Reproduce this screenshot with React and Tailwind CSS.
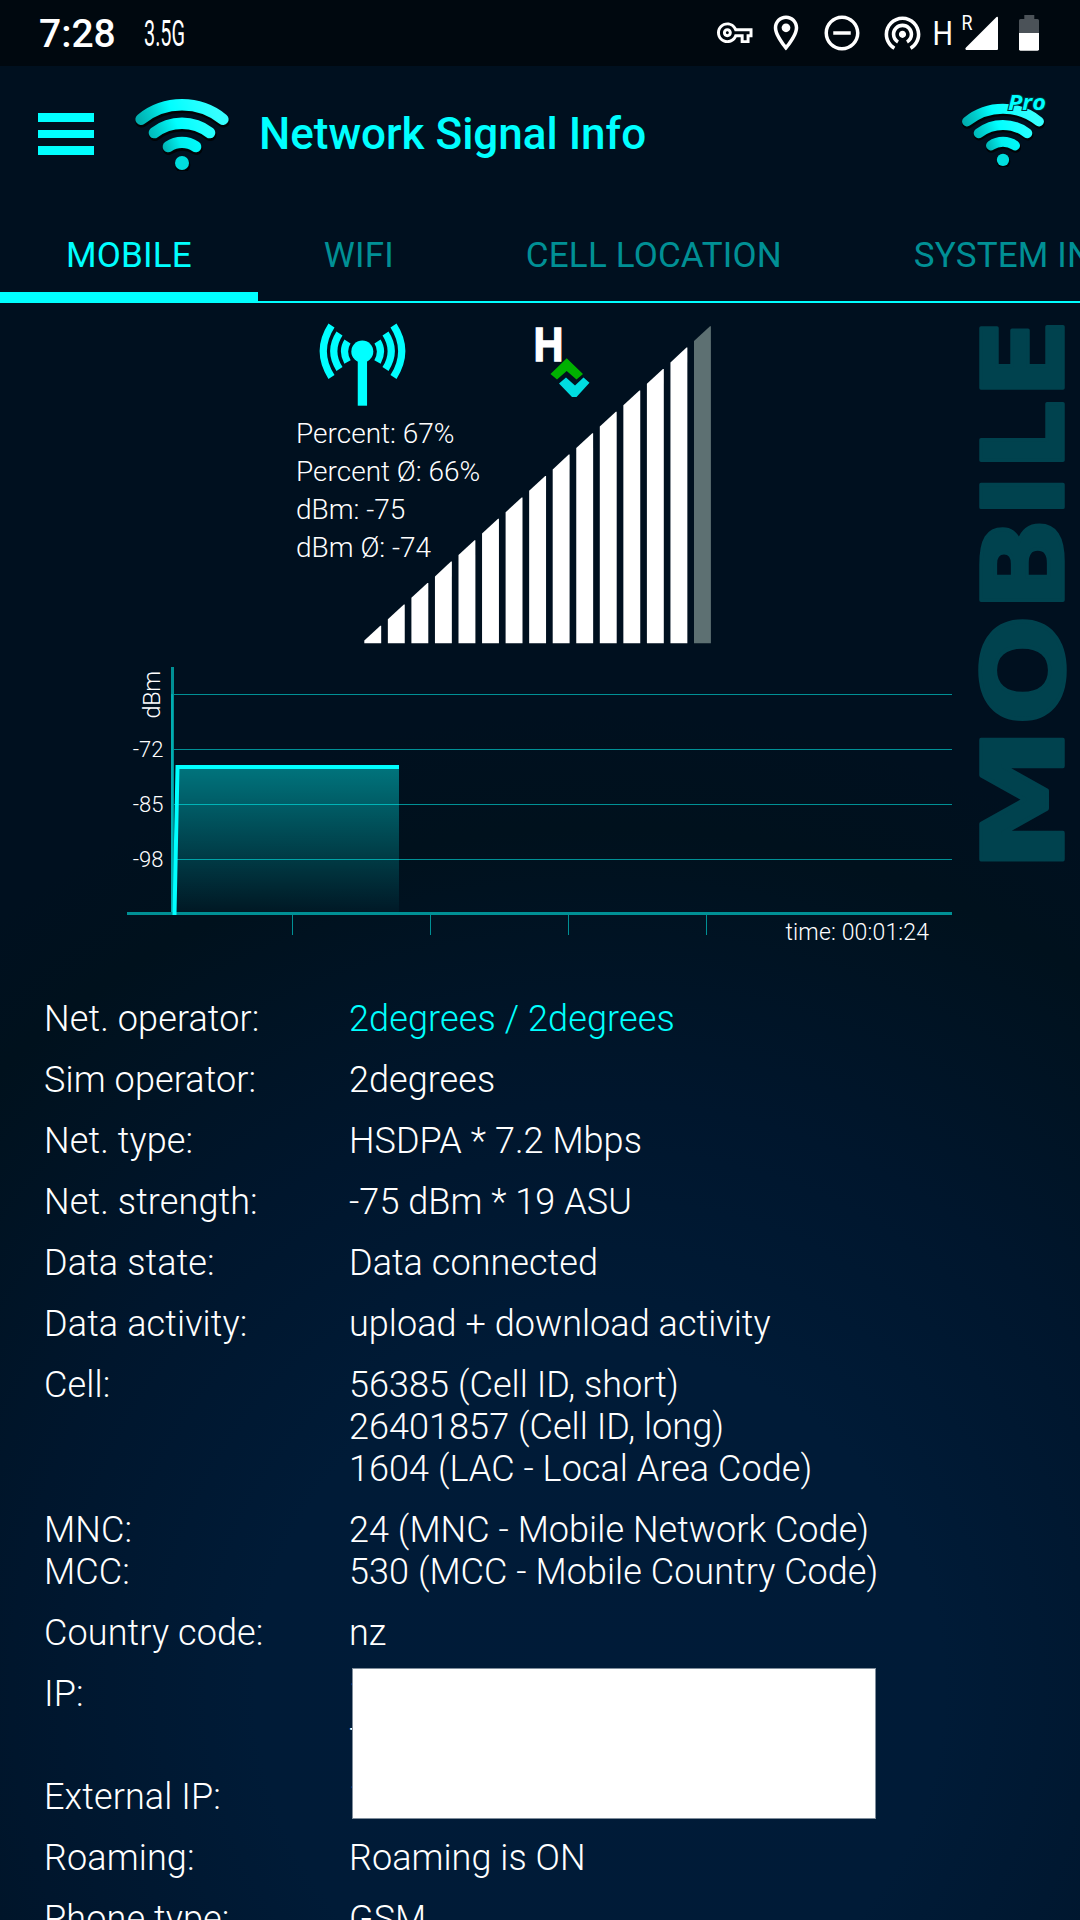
import React from "react";
import {
  MdOutlineLocationOn,
  MdRemoveCircleOutline,
  MdWifiTethering,
} from "react-icons/md";

const tabs = ["MOBILE", "WIFI", "CELL LOCATION", "SYSTEM INFO"];

const rows = [
  { label: ["Net. operator:"], value: ["2degrees / 2degrees"], accent: true },
  { label: ["Sim operator:"], value: ["2degrees"] },
  { label: ["Net. type:"], value: ["HSDPA * 7.2 Mbps"] },
  { label: ["Net. strength:"], value: ["-75 dBm * 19 ASU"] },
  { label: ["Data state:"], value: ["Data connected"] },
  { label: ["Data activity:"], value: ["upload + download activity"] },
  {
    label: ["Cell:"],
    value: [
      "56385 (Cell ID, short)",
      "26401857 (Cell ID, long)",
      "1604 (LAC - Local Area Code)",
    ],
  },
  {
    label: ["MNC:", "MCC:"],
    value: ["24 (MNC - Mobile Network Code)", "530 (MCC - Mobile Country Code)"],
  },
  { label: ["Country code:"], value: ["nz"] },
  { label: ["IP:"], value: ["1", "f"], masked: true },
  { label: ["External IP:"], value: ["1"] },
  { label: ["Roaming:"], value: ["Roaming is ON"] },
  { label: ["Phone type:"], value: ["GSM"] },
];

const WifiLogo = ({ id, className }) => (
  <svg viewBox="0 0 98 76" className={className}>
    <defs>
      <linearGradient id={id} gradientUnits="userSpaceOnUse" x1="6" y1="44" x2="82" y2="14">
        <stop offset="0" stopColor="#00a3a3" />
        <stop offset="0.25" stopColor="#00cccc" />
        <stop offset="0.5" stopColor="#00ffff" />
        <stop offset="1" stopColor="#35ffff" />
      </linearGradient>
      <linearGradient id={id + "-in"} gradientUnits="userSpaceOnUse" x1="24" y1="56" x2="70" y2="38">
        <stop offset="0" stopColor="#009a9a" />
        <stop offset="0.5" stopColor="#00efef" />
        <stop offset="1" stopColor="#00ffff" />
      </linearGradient>
    </defs>
    {/* dark offset shadow */}
    <g transform="translate(0.6 2)" fill="none" stroke="#000306" strokeWidth="12.6" strokeLinecap="round">
      <path d="M8 24.3A65 65 0 0 1 90 24.3" />
      <path d="M21.3 37.7A45.3 45.3 0 0 1 76.7 37.7" />
      <path d="M35.3 51.7A24 24 0 0 1 62.7 51.7" />
      <circle cx="49" cy="68" r="1.5" />
    </g>
    <g fill="none" stroke={`url(#${id})`} strokeWidth="11.3" strokeLinecap="round">
      <path d="M8 24.3A65 65 0 0 1 90 24.3" />
      <path d="M21.3 37.7A45.3 45.3 0 0 1 76.7 37.7" />
      <path d="M35.3 51.7A24 24 0 0 1 62.7 51.7" stroke={`url(#${id}-in)`} />
    </g>
    <circle cx="49" cy="68" r="7" fill="#00dede" />
  </svg>
);

const StatusBar = () => (
  <div className="flex h-[66px] items-start bg-[#00080f] text-white">
    <span className="ml-[39px] mt-[11px] w-[78px] text-[39px] leading-[46px] font-medium">
      7:28
    </span>
    <svg className="ml-[25px] mt-[10px] h-[46px] w-[48px] overflow-visible" viewBox="142 10 48 46">
      <text x="144" y="46" textLength="41" lengthAdjust="spacingAndGlyphs" fill="#fff" fontSize="36" fontWeight="400">
        3.5G
      </text>
    </svg>
    <svg className="ml-[527px] mt-[15px] size-[35.5px]" viewBox="0 0 24 24" fill="#fff">
      <path d="M22 19h-6v-4h-2.68c-1.14 2.42-3.6 4-6.32 4-3.86 0-7-3.14-7-7s3.14-7 7-7c2.72 0 5.17 1.58 6.32 4H24v6h-2v4zm-4-2h2v-4h2v-2H11.94l-.23-.67C11.01 8.34 9.11 7 7 7c-2.76 0-5 2.24-5 5s2.24 5 5 5c2.11 0 4.01-1.34 4.71-3.33l.23-.67H18v4zM7 15c-1.65 0-3-1.35-3-3s1.35-3 3-3 3 1.35 3 3-1.35 3-3 3zm0-4c-.55 0-1 .45-1 1s.45 1 1 1 1-.45 1-1-.45-1-1-1z" />
    </svg>
    <MdOutlineLocationOn className="ml-[12px] mt-[11.5px] size-[42px]" />
    <MdRemoveCircleOutline className="ml-[14px] mt-[11.5px] size-[42px]" />
    <MdWifiTethering className="ml-[18px] mt-[11px] size-[43px]" />
    <svg className="ml-[8px] mt-[5px] h-[51px] w-[110px] overflow-visible" viewBox="932 5 110 51">
      <text x="932.500" y="44.700" fontSize="34" fill="#fff" textLength="20.500" lengthAdjust="spacingAndGlyphs">H</text>
      <text x="961.500" y="30" fontSize="21" fill="#fff" textLength="11" lengthAdjust="spacingAndGlyphs">R</text>
      <path d="M998 18v31a1 1 0 0 1-1 1H966q-1.500-1 0-2.400L996.500 17q1.500-.800 1.500 1z" fill="#fff" />
      <path d="M1024.300 15h10v4h3.200q1.500 0 1.500 1.500V33h-20V20.500q0-1.500 1.500-1.500h3.800z" fill="#4b5258" />
      <path d="M1019 33h20v16.300q0 1.400-1.400 1.400h-17.200q-1.400 0-1.400-1.400z" fill="#fff" />
    </svg>
  </div>
);

const Header = () => (
  <header className="flex h-[123px] items-start">
    <div className="ml-[38px] mt-[47px] flex w-[56px] flex-col gap-[8px]">
      <span className="h-[8.5px] bg-[#00ffff]"></span>
      <span className="h-[8.5px] bg-[#00ffff]"></span>
      <span className="h-[8.5px] bg-[#00ffff]"></span>
    </div>
    <WifiLogo id="logo" className="ml-[38.5px] mt-[29px] h-[76px] w-[98px]" />
    <h1 className="ml-[28.5px] mt-[42px] text-[44px] leading-[52px] font-medium whitespace-nowrap text-[#00ffff]">
      Network Signal Info
    </h1>
    <div className="relative mr-[34px] mt-[34px] ml-auto">
      <WifiLogo id="pro" className="h-[67px] w-[86px]" />
      <svg className="absolute -top-[12px] left-[44px] h-[32px] w-[50px] overflow-visible" viewBox="0 0 50 32">
        <text x="4" y="21.500" fontSize="21.500" fontWeight="700" fontStyle="italic" fontFamily="Open Sans, sans-serif" fill="#00ffff" stroke="#003038" strokeWidth="2" paintOrder="stroke" textLength="38" lengthAdjust="spacingAndGlyphs">
          Pro
        </text>
      </svg>
    </div>
  </header>
);

const Tabs = () => (
  <nav className="flex h-[114px] overflow-hidden border-b-2 border-[#00ffff]">
    {tabs.map((tab, i) => (
      <div
        key={tab}
        className={
          i === 0
            ? "-mb-[2px] flex shrink-0 justify-center border-b-[11px] border-[#00ffff] px-[66px] pt-[46px] text-[#00ffff]"
            : "flex shrink-0 justify-center px-[66px] pt-[46px] text-[#009095]"
        }
      >
        <span className="text-[35px] leading-[41px] tracking-[0.17px] whitespace-nowrap">{tab}</span>
      </div>
    ))}
  </nav>
);

const SignalBars = () => {
  const bars = Array.from({ length: 15 }, (_, i) => {
    const x = 1.3 + i * 23.55;
    const top = 299.8 - i * 21.4;
    return { x, right: top, left: Math.min(top + 14.8, 317.3) };
  });
  return (
    <svg className="h-[320px] w-[352px]" viewBox="0 0 352 320">
      {bars.map((b, i) => (
        <polygon
          key={i}
          points={`${b.x},${b.left} ${b.x + 16},${b.right} ${b.x + 16.9},${b.right} ${b.x + 16.9},317.3 ${b.x},317.3`}
          fill={i === 14 ? "#5d7072" : "#fff"}
        />
      ))}
    </svg>
  );
};

const Signal = () => (
  <section className="relative h-[350px] pt-[16px] pl-[296px]">
    {/* antenna and data direction */}
    <div className="flex items-start">
      <svg className="ml-[21px] h-[88px] w-[92px]" viewBox="317 319 92 88" fill="none" stroke="#00ffff">
        <circle cx="362.300" cy="351.500" r="11" fill="#00ffff" stroke="none" />
        <path d="M362.400 352v53.700" strokeWidth="9.300" />
        <path strokeWidth="7.200" d="M331.500 325.500Q315 351 331.500 377M339.500 333.500Q328 351 339.500 369M347.500 341.500Q341.500 351 347.500 362" />
        <path strokeWidth="7.200" d="M393.500 325.500Q410 351 393.500 377M385.500 333.500Q397 351 385.500 369M377.500 341.500Q383.500 351 377.500 362" />
      </svg>
      <svg className="ml-[121px] h-[88px] w-[66px] overflow-visible" viewBox="530 319 66 88">
        <text x="533.500" y="361" fontSize="48.500" fontWeight="700" fontFamily="Liberation Sans, sans-serif" fill="#fff" stroke="#fff" strokeWidth="1.400" textLength="30" lengthAdjust="spacingAndGlyphs">H</text>
        <path d="M550.500 374L566.700 358.300 583 374l-6.500 5.500-9.800-8.500-9.700 8.500z" fill="#00b000" />
        <path d="M559 383.500l7-6 9 8 8.500-8 6 5.300-13 14.200h-4.500z" fill="#00dce0" />
      </svg>
    </div>
    <div className="absolute top-[23px] left-[363px]">
      <SignalBars />
    </div>
    <div className="relative mt-[8px] text-[28px] leading-[38px] font-light text-white">
      <p>Percent: 67%</p>
      <p>Percent Ø: 66%</p>
      <p>dBm: -75</p>
      <p>dBm Ø: -74</p>
    </div>
  </section>
);

const Chart = () => (
  <svg className="ml-[120px] h-[300px] w-[840px]" viewBox="120 653 840 300">
    <defs>
      <linearGradient id="area" x1="0" y1="0" x2="0" y2="1">
        <stop offset="0" stopColor="#00ffff" stopOpacity="0.42" />
        <stop offset="1" stopColor="#00ffff" stopOpacity="0.03" />
      </linearGradient>
    </defs>
    <g fill="#009095">
      <rect x="171" y="667" width="3" height="246" />
      <rect x="171" y="694" width="2" height="219" fill="#00adb2" />
      {[694, 749, 804, 859].map((y) => (
        <rect key={y} x="174" y={y} width="778" height="1" />
      ))}
      {[292, 430, 568, 706].map((x) => (
        <rect key={x} x={x} y="915" width="1" height="20" />
      ))}
    </g>
    <rect x="177" y="767" width="222" height="145" fill="url(#area)" />
    <rect x="127" y="912" width="825" height="3" fill="#009095" />
    <path d="M174.500 915L177.500 767H399" fill="none" stroke="#00ffff" strokeWidth="4" />
    <g fill="#fff" fontSize="22" fontWeight="300">
      <text x="163.500" y="756.700" textAnchor="end">-72</text>
      <text x="163.500" y="811.700" textAnchor="end">-85</text>
      <text x="163.500" y="866.700" textAnchor="end">-98</text>
      <text x="785.500" y="940" fontSize="23" textLength="143.500">time: 00:01:24</text>
      <text transform="translate(160 718.500) rotate(-90)" fontSize="23.500" textLength="47.500">dBm</text>
    </g>
  </svg>
);

// Page name along the right edge, each letter widened to its own set width
const letters = [
  { ch: "M", x: -11.7, w: 146.4 },
  { ch: "O", x: 135.6, w: 110.7 },
  { ch: "B", x: 249.4, w: 94.7 },
  { ch: "I", x: 342.7, w: 44.8 },
  { ch: "L", x: 390.8, w: 69.5 },
  { ch: "E", x: 462.2, w: 80.5 },
];

const SideTitle = () => (
  <svg className="absolute top-[306px] left-[955px] h-[580px] w-[125px] overflow-visible" viewBox="955 306 125 580">
    <text
      transform="translate(1062.500 861) rotate(-90)"
      fontSize="112.500"
      fontWeight="700"
      fontFamily="DejaVu Sans, sans-serif"
      fill="#00424e"
      stroke="#00424e"
      strokeWidth="3.500"
      strokeLinejoin="round"
    >
      {letters.map((l) => (
        <tspan key={l.ch} x={l.x} textLength={l.w} lengthAdjust="spacingAndGlyphs">
          {l.ch}
        </tspan>
      ))}
    </text>
  </svg>
);

const App = () => {
  return (
    <div className="relative h-[1920px] w-[1080px] overflow-hidden bg-[#001020] bg-[radial-gradient(circle_980px_at_600px_1690px,#001b38_0%,#001b37_35%,#00162d_60%,#00111d_88%,#00101f_100%)] font-[Roboto,sans-serif]">
      <StatusBar />
      <Header />
      <Tabs />
      <Signal />
      <Chart />
      <SideTitle />

      <div className="mt-[45px] flex flex-col gap-[19px] pl-[44px] text-[36px] leading-[42px] font-light tracking-[0.05px] text-white">
        {rows.map((row) => (
          <div key={row.label[0]} className="flex items-start">
            <div className="w-[305px] shrink-0 tracking-[0.12px]">
              {row.label.map((l) => (
                <p key={l}>{l}</p>
              ))}
            </div>
            <div
              className={
                row.accent
                  ? "tracking-[0.12px] text-[#00ffff]"
                  : row.masked
                    ? "relative z-10"
                    : ""
              }
            >
              {row.value.map((v) => (
                <p key={v} className="whitespace-nowrap">{v}</p>
              ))}
              {row.masked && (
                <div className="absolute top-[-5px] left-[3px] h-[151px] w-[524px] border border-[#7f8d9b] bg-white"></div>
              )}
            </div>
          </div>
        ))}
      </div>
    </div>
  );
};

export default App;
